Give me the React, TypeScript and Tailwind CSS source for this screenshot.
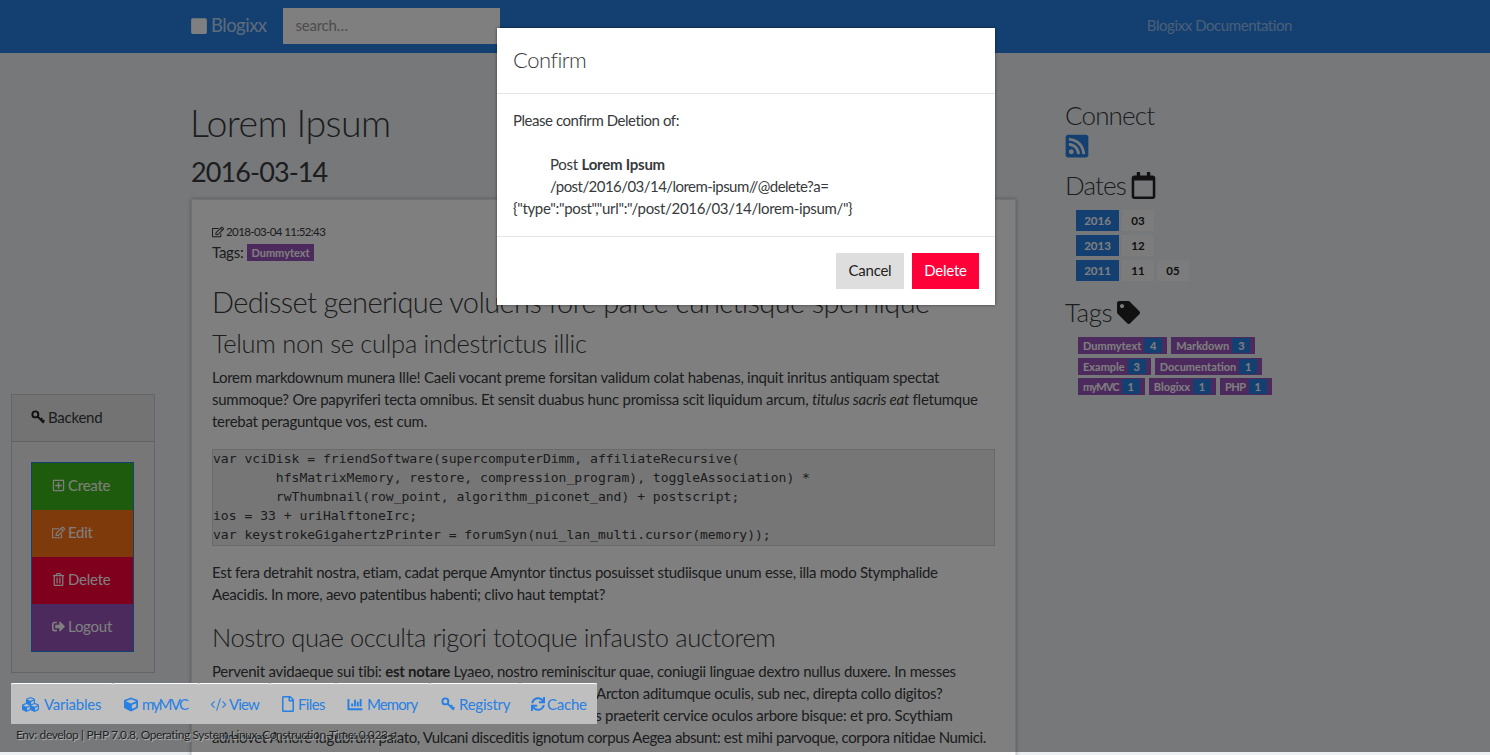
import React from 'react';
import { CodeXml } from 'lucide-react';
import {
  FaChartBar, FaCube, FaCubes, FaRegCalendar, FaRegEdit, FaRegFile, FaRegPlusSquare,
  FaRegTrashAlt, FaRssSquare, FaSignOutAlt, FaSquare, FaSync, FaTag,
} from 'react-icons/fa';

const dates = [
  { year: '2016', months: ['03'] },
  { year: '2013', months: ['12'] },
  { year: '2011', months: ['11', '05'] },
];

const tagRows: [string, number, string][][] = [
  [['Dummytext', 4, ''], ['Markdown', 3, '']],
  [['Example', 3, ''], ['Documentation', 1, '']],
  [['myMVC', 1, 'tracking-[-0.8px]'], ['Blogixx', 1, ''], ['PHP', 1, 'tracking-[-0.5px]']],
];

const backendLinks = [
  { label: 'Create', icon: FaRegPlusSquare, color: 'bg-[#3fb618]' },
  { label: 'Edit', icon: FaRegEdit, color: 'bg-[#ff7518]' },
  { label: 'Delete', icon: FaRegTrashAlt, color: 'bg-[#ff0039]' },
  { label: 'Logout', icon: FaSignOutAlt, color: 'bg-[#9954bb]' },
];

// outlined key, the solid one from the icon set is too heavy
const KeyIcon = ({ className }: { className?: string }) => (
  <svg viewBox="0 0 16 16" fill="none" stroke="currentColor" className={className}>
    <circle cx="5" cy="5" r="3.4" strokeWidth="2.2" />
    <path d="M7.6 7.6 14.6 14.6M11.2 11.2 13 9.4M13.4 13.4 15.2 11.6" strokeWidth="2.2" />
  </svg>
);

const debugTabs = [
  { label: 'Variables', icon: FaCubes, width: 'w-[102px]', iconClass: 'w-[17px] h-[17px] mr-[5px]', text: '' },
  { label: 'myMVC', icon: FaCube, width: 'w-[86px]', iconClass: 'w-[14px] h-[15px] mr-[4px]', text: 'tracking-[-1.6px]' },
  { label: 'View', icon: CodeXml, width: 'w-[71px]', iconClass: 'w-[17px] h-[17px] mr-[2px]', text: 'tracking-[-0.9px]' },
  { label: 'Files', icon: FaRegFile, width: 'w-[66px]', iconClass: 'w-[14px] h-[16px] mr-[3px]', text: 'tracking-[-0.6px]' },
  { label: 'Memory', icon: FaChartBar, width: 'w-[94px]', iconClass: 'w-[16px] h-[15px] mr-[4px]', text: 'tracking-[-0.9px]' },
  { label: 'Registry', icon: KeyIcon, width: 'w-[90px]', iconClass: 'w-[14px] h-[14px] mr-[4px]', text: '' },
  { label: 'Cache', icon: FaSync, width: 'w-[77px]', iconClass: 'w-[14px] h-[14px] mr-[2px]', text: '' },
];

const Navbar = () => (
  <nav className="h-[53px] bg-[#2780e3]">
    <div className="mx-auto flex h-full w-[1140px] items-center pb-[2px] pl-[15px]">
      <a className="flex items-center text-[18.5px] tracking-[-0.5px] text-white/70">
        <FaSquare className="mr-[3px] h-[18px] w-[18px] text-white" />
        Blogixx
      </a>
      <div className="ml-4 flex h-[36px] w-[217px] items-center bg-white pl-[13px] text-[15px] tracking-[-0.25px] text-[#999]">search…</div>
      <a className="ml-auto mr-[23px] text-[15px] tracking-[-0.43px] text-white/50">Blogixx Documentation</a>
    </div>
  </nav>
);

const Post = () => (
  <main className="w-[855px] pl-[16px] pr-[14px] pt-[45px]">
    <h1 className="-ml-px text-[37.5px] font-light leading-[50px] tracking-[-0.6px] text-[#373a3c]">Lorem Ipsum</h1>
    <h2 className="mt-[3px] text-[27px] leading-[42px] tracking-[-0.9px] text-[#373a3c]">2016-03-14</h2>
    <article className="mt-[6px] h-[600px] border border-black/10 bg-white px-5 pt-6 text-[15px] leading-[22px] tracking-[-0.25px] text-[#373a3c] shadow-[0_0_4px_rgba(0,0,0,0.3)]">
      <div className="flex items-center text-[11.5px] leading-[16px] tracking-[-0.6px]">
        <FaRegEdit className="mr-[2px] h-3 w-3" />
        2018-03-04 11:52:43
      </div>
      <div className="mt-[1px] flex items-center">
        Tags:
        <span className="ml-[4px] mt-px bg-[#9954bb] px-1 text-[11px] font-bold leading-[17px] tracking-normal text-white">Dummytext</span>
      </div>
      <h3 className="mt-[19px] text-[29px] font-light leading-[40px] tracking-[-0.6px]">
        Dedisset generique voluens fore parce cunctisque spernique
      </h3>
      <h4 className="mt-[4px] text-[25.5px] font-light leading-[34px] tracking-[-0.3px]">Telum non se culpa indestrictus illic</h4>
      <p className="mt-[6px] whitespace-nowrap">
        Lorem markdownum munera Ille! Caeli vocant preme forsitan validum colat habenas, inquit inritus antiquam spectat
        <br />
        summoque? Ore papyriferi tecta omnibus. Et sensit duabus hunc promissa scit liquidum arcum, <em>titulus sacris eat</em> fletumque
        <br />
        terebat peraguntque vos, est cum.
      </p>
      <pre className="mt-[17px] h-[97px] border border-black/10 bg-black/[0.07] font-['DejaVu_Sans_Mono',monospace] text-[13.05px] leading-[19px] tracking-normal">
        <code className="-mt-px block font-['DejaVu_Sans_Mono',monospace]">{`var vciDisk = friendSoftware(supercomputerDimm, affiliateRecursive(
        hfsMatrixMemory, restore, compression_program), toggleAssociation) *
        rwThumbnail(row_point, algorithm_piconet_and) + postscript;
ios = 33 + uriHalftoneIrc;
var keystrokeGigahertzPrinter = forumSyn(nui_lan_multi.cursor(memory));`}</code>
      </pre>
      <p className="mt-[15px] whitespace-nowrap tracking-[-0.29px]">
        Est fera detrahit nostra, etiam, cadat perque Amyntor tinctus posuisset studiisque unum esse, illa modo Stymphalide
        <br />
        Aeacidis. In more, aevo patentibus habenti; clivo haut temptat?
      </p>
      <h4 className="mt-[15px] text-[25.5px] font-light leading-[34px] tracking-[-0.4px]">Nostro quae occulta rigori totoque infausto auctorem</h4>
      <p className="mt-[6px] whitespace-nowrap">
        Pervenit avidaeque sui tibi: <strong>est notare</strong> Lyaeo, nostro reminiscitur quae, coniugii linguae dextro nullus duxere. In messes
        <br />
        pectora tamen mihi fuit, ut herbas et ipsa sic lumina flammis. Arcton aditumque oculis, sub nec, direpta collo digitos?
        <br />
        Atque sua nec vertitur, manibus tenet arida cum lacrimis ipsos praeterit cervice oculos arbore bisque: et pro. Scythiam
        <br />
        <span className="tracking-[-0.37px]">admovet Amore lugubrum palato, Vulcani disceditis ignotum corpus Aegea absunt: est mihi parvoque, corpora nitidae Numici.</span>
      </p>
    </article>
  </main>
);

const Sidebar = () => (
  <aside className="pl-[35px] pt-[45px] text-[#373a3c]">
    <h3 className="text-[26px] font-light leading-[34px] tracking-[-0.85px]">Connect</h3>
    <FaRssSquare className="mt-px h-[26px] w-[24px] text-[#2780e3]" />
    <h3 className="mt-[9px] flex items-center text-[26px] font-light leading-[34px] tracking-[-0.9px]">
      Dates
      <FaRegCalendar className="ml-[5px] h-[27px] w-[25px] text-[#222]" />
    </h3>
    <div className="ml-[11px] mt-[8px] flex flex-col gap-[4px]">
      {dates.map((d) => (
        <div key={d.year} className="flex gap-[3px] text-[11.5px] font-bold leading-[21px]">
          <span className="w-[43px] bg-[#2780e3] text-center text-white">{d.year}</span>
          {d.months.map((m) => (
            <span key={m} className="w-[32px] bg-[#f8f9fa] text-center text-[#222]">{m}</span>
          ))}
        </div>
      ))}
    </div>
    <h3 className="mt-[14px] flex items-center text-[26px] font-light leading-[34px] tracking-[-0.45px]">
      Tags
      <FaTag className="ml-[5px] h-[23px] w-[23px] text-[#222]" />
    </h3>
    <div className="ml-[13px] mt-[8px] flex flex-col gap-[3.5px]">
      {tagRows.map((row, i) => (
        <div key={i} className="flex gap-[4px] text-[11px] font-bold leading-[17px]">
          {row.map(([label, count, spacing]) => (
            <span key={label} className="flex bg-[#9954bb] pl-[5px] text-white">
              <span className={spacing}>{label}</span>
              <span className="my-px ml-[3px] mr-[5px] w-[18px] bg-[#2780e3] text-center leading-[15px]">{count}</span>
            </span>
          ))}
        </div>
      ))}
    </div>
  </aside>
);

const BackendPanel = () => (
  <div className="absolute left-[11px] top-[394px] w-[144px] border border-black/15 bg-[#eee] text-[15px] tracking-[-0.25px] text-[#373a3c]">
    <div className="flex h-[47px] items-center border-b border-black/15 bg-black/[0.03] pb-[2px] pl-[19px]">
      <KeyIcon className="mr-[3px] h-[14px] w-[14px] text-[#222]" />
      Backend
    </div>
    <div className="py-5 pl-[19px] pr-5">
      <div className="border border-[#2780e3]">
        {backendLinks.map((l) => (
          <a key={l.label} className={`flex h-[47px] items-center pb-[2px] pl-[20px] text-white ${l.color}`}>
            <l.icon className="mr-[3px] h-[13px] w-[13px]" />
            {l.label}
          </a>
        ))}
      </div>
    </div>
  </div>
);

const DebugBar = () => (
  <div className="absolute left-[11px] top-[683px] z-30">
    <div className="flex h-[41px] w-[586px] bg-[#bfbfbf] text-[15px] tracking-[-0.25px] text-[#2780e3]">
      {debugTabs.map((t) => (
        <a key={t.label} className={`flex items-center rounded-t-[2px] border-t border-white pl-[11px] ${t.width}`}>
          <t.icon className={t.iconClass} strokeWidth={t.label === 'View' ? 1.5 : undefined} />
          <span className={t.text}>{t.label}</span>
        </a>
      ))}
    </div>
    <div className="ml-[5px] mt-[3px] whitespace-nowrap text-[12px] leading-[16px] tracking-[-0.4px] text-[#222] [text-shadow:1px_1px_1px_#bbb]">
      Env: develop | PHP 7.0.8, Operating System Linux, Construction-Time: 0.023 s
    </div>
  </div>
);

const ConfirmModal = () => (
  <div className="absolute left-[497px] top-[28px] z-20 w-[498px] bg-white text-[15px] leading-[22px] tracking-[-0.25px] text-[#373a3c] shadow-[0_0_3px_rgba(0,0,0,0.5)]">
    <div className="flex h-[66px] items-center border-b border-[#e5e5e5] px-4 pb-[2px] text-[22px] font-light tracking-[-0.5px]">Confirm</div>
    <div className="h-[143px] border-b border-[#e5e5e5] px-4 pt-[15px]">
      <span className="tracking-[-0.45px]">Please confirm Deletion of:</span>
      <br />
      <br />
      <span className="pl-[37px]">Post <strong>Lorem Ipsum</strong></span>
      <br />
      <span className="pl-[37px] tracking-[-0.55px]">/post/2016/03/14/lorem-ipsum//@delete?a=</span>
      <br />
      <span className="tracking-[-0.33px]">{'{"type":"post","url":"/post/2016/03/14/lorem-ipsum/"}'}</span>
    </div>
    <div className="flex h-[68px] items-center justify-end gap-2 px-4">
      <button className="h-[36px] w-[68px] bg-[#dedede] pb-[2px] text-[#222]">Cancel</button>
      <button className="h-[36px] w-[67px] bg-[#ff0039] pb-[2px] text-white">Delete</button>
    </div>
  </div>
);

export default function App() {
  return (
    <div className="relative h-[755px] overflow-hidden bg-[#eef1f4] font-[Lato,sans-serif]">
      <Navbar />
      <div className="mx-auto flex w-[1140px]">
        <Post />
        <Sidebar />
      </div>
      <BackendPanel />
      <div className="absolute inset-x-0 top-0 z-10 h-[752px] bg-black/50" />
      <ConfirmModal />
      <DebugBar />
    </div>
  );
}
